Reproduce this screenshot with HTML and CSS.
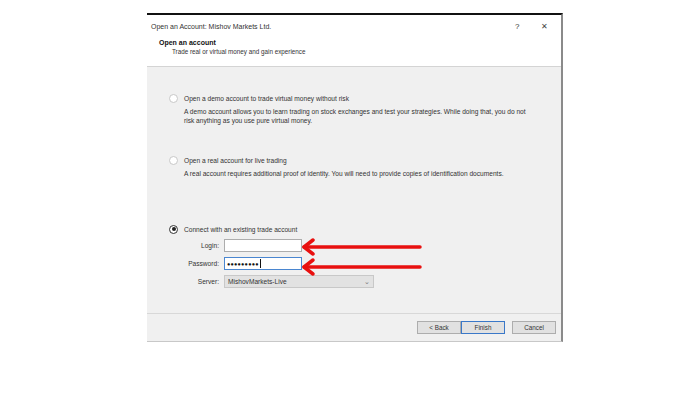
FILE: index.html
```html
<!DOCTYPE html>
<html lang="en">
<head>
    <meta charset="UTF-8">
    <title>Open an Account</title>
    <link rel="stylesheet" href="styles.css">
</head>
<body>
    <div class="dialog">
        <div class="titlebar">
            <span class="title">Open an Account: Mishov Markets Ltd.</span>
            <span class="help">?</span>
            <span class="close">&#x2715;</span>
        </div>
        <div class="header">
            <div class="header-title">Open an account</div>
            <div class="header-sub">Trade real or virtual money and gain experience</div>
        </div>
        <div class="content">
            <div class="option opt-demo">
                <div class="radio-row"><span class="radio"></span>Open a demo account to trade virtual money without risk</div>
                <div class="desc">A demo account allows you to learn trading on stock exchanges and test your strategies. While doing that, you do not<br>risk anything as you use pure virtual money.</div>
            </div>
            <div class="option opt-real">
                <div class="radio-row"><span class="radio"></span>Open a real account for live trading</div>
                <div class="desc">A real account requires additional proof of identity. You will need to provide copies of identification documents.</div>
            </div>
            <div class="option opt-existing">
                <div class="radio-row"><span class="radio checked"></span>Connect with an existing trade account</div>
                <div class="form">
                    <div class="form-row">
                        <label class="form-label">Login:</label>
                        <div class="field"></div>
                    </div>
                    <div class="form-row">
                        <label class="form-label">Password:</label>
                        <div class="field focused"><span class="dots">&#x25CF;&#x25CF;&#x25CF;&#x25CF;&#x25CF;&#x25CF;&#x25CF;&#x25CF;&#x25CF;</span><span class="caret"></span></div>
                    </div>
                    <div class="form-row">
                        <label class="form-label">Server:</label>
                        <div class="select">MishovMarkets-Live<span class="chev">&#x2304;</span></div>
                    </div>
                </div>
            </div>
        </div>
        <div class="footer">
            <button class="btn">&lt; Back</button>
            <button class="btn primary">Finish</button>
            <button class="btn cancel">Cancel</button>
        </div>
        <svg class="arrows" width="130" height="40" viewBox="0 0 130 40">
            <g fill="none" stroke="#e8100f" stroke-width="3.5" stroke-linecap="round" stroke-linejoin="round">
                <path d="M8 9 H124"/>
                <path d="M17 2 L8 9 L17 16"/>
                <path d="M8 29 H124"/>
                <path d="M17 22 L8 29 L17 36"/>
            </g>
        </svg>
    </div>
</body>
</html>
```

FILE: styles.css
```css
body {
    margin: 0;
    background: #fff;
    font-family: "Liberation Sans", Arial, sans-serif;
    color: #222;
}
.dialog {
    position: relative;
    margin: 13px 0 0 147px;
    width: 414px;
    border-top: 2px solid #111;
    border-right: 2px solid #8a8a8a;
    border-bottom: 1px solid #c8c8c8;
    background: #fff;
}
.titlebar {
    display: flex;
    align-items: center;
    height: 22px;
    padding: 0 0 0 4px;
    font-size: 7px;
    color: #333;
}
.title {
    flex: 1;
}
.help {
    width: 26px;
    font-size: 8px;
}
.close {
    width: 20px;
    font-size: 8px;
    color: #444;
}
.header {
    height: 30px;
    padding: 2px 0 0 12px;
    box-sizing: border-box;
    border-bottom: 1px solid #d4d4d4;
}
.header-title {
    font-size: 7px;
    font-weight: bold;
    color: #111;
}
.header-sub {
    margin: 2px 0 0 13px;
    font-size: 6.3px;
    color: #333;
}
.content {
    background: #f0f0f0;
    height: 247px;
    padding: 26px 0 0 22px;
    box-sizing: border-box;
    border-bottom: 1px solid #d8d8d8;
    font-size: 6.6px;
    color: #333;
}
.radio-row {
    display: flex;
    align-items: center;
    height: 10px;
}
.radio {
    width: 7px;
    height: 7px;
    border: 1px solid #c8c8c8;
    border-radius: 50%;
    background: #fff;
    margin: 0 6px 0 0;
    position: relative;
}
.radio.checked {
    border-color: #333;
}
.radio.checked::after {
    content: "";
    position: absolute;
    left: 1.5px;
    top: 1.5px;
    width: 4px;
    height: 4px;
    border-radius: 50%;
    background: #222;
}
.desc {
    margin: 4px 0 0 15px;
    line-height: 9px;
}
.opt-real {
    margin-top: 30px;
}
.opt-existing {
    margin-top: 46px;
}
.form {
    margin-top: 5px;
}
.form-row {
    display: flex;
    align-items: center;
    margin-bottom: 5px;
}
.form-label {
    width: 50px;
    text-align: right;
    margin-right: 5px;
}
.field {
    width: 74px;
    height: 11px;
    border: 1px solid #adadad;
    background: #fff;
    display: flex;
    align-items: center;
    padding-left: 2px;
    box-sizing: content-box;
}
.field.focused {
    border-color: #4a86d0;
}
.dots {
    font-size: 5.5px;
    letter-spacing: 0.2px;
    color: #111;
}
.caret {
    width: 1px;
    height: 9px;
    background: #111;
    margin-left: 1px;
}
.select {
    width: 142px;
    height: 11px;
    border: 1px solid #c8c8c8;
    background: #e2e2e2;
    display: flex;
    align-items: center;
    justify-content: space-between;
    padding: 0 3px;
}
.chev {
    font-size: 7px;
    color: #777;
    line-height: 6px;
}
.footer {
    background: #f0f0f0;
    height: 27px;
    display: flex;
    align-items: center;
    justify-content: flex-end;
    padding-right: 5px;
}
.btn {
    width: 44px;
    height: 13px;
    padding: 0;
    border: 1px solid #adadad;
    background: #e1e1e1;
    font-family: "Liberation Sans", Arial, sans-serif;
    font-size: 6.3px;
    color: #333;
}
.btn.primary {
    border-color: #3a78c8;
}
.btn.cancel {
    margin-left: 7px;
}
.arrows {
    position: absolute;
    left: 149px;
    top: 223px;
}
```
